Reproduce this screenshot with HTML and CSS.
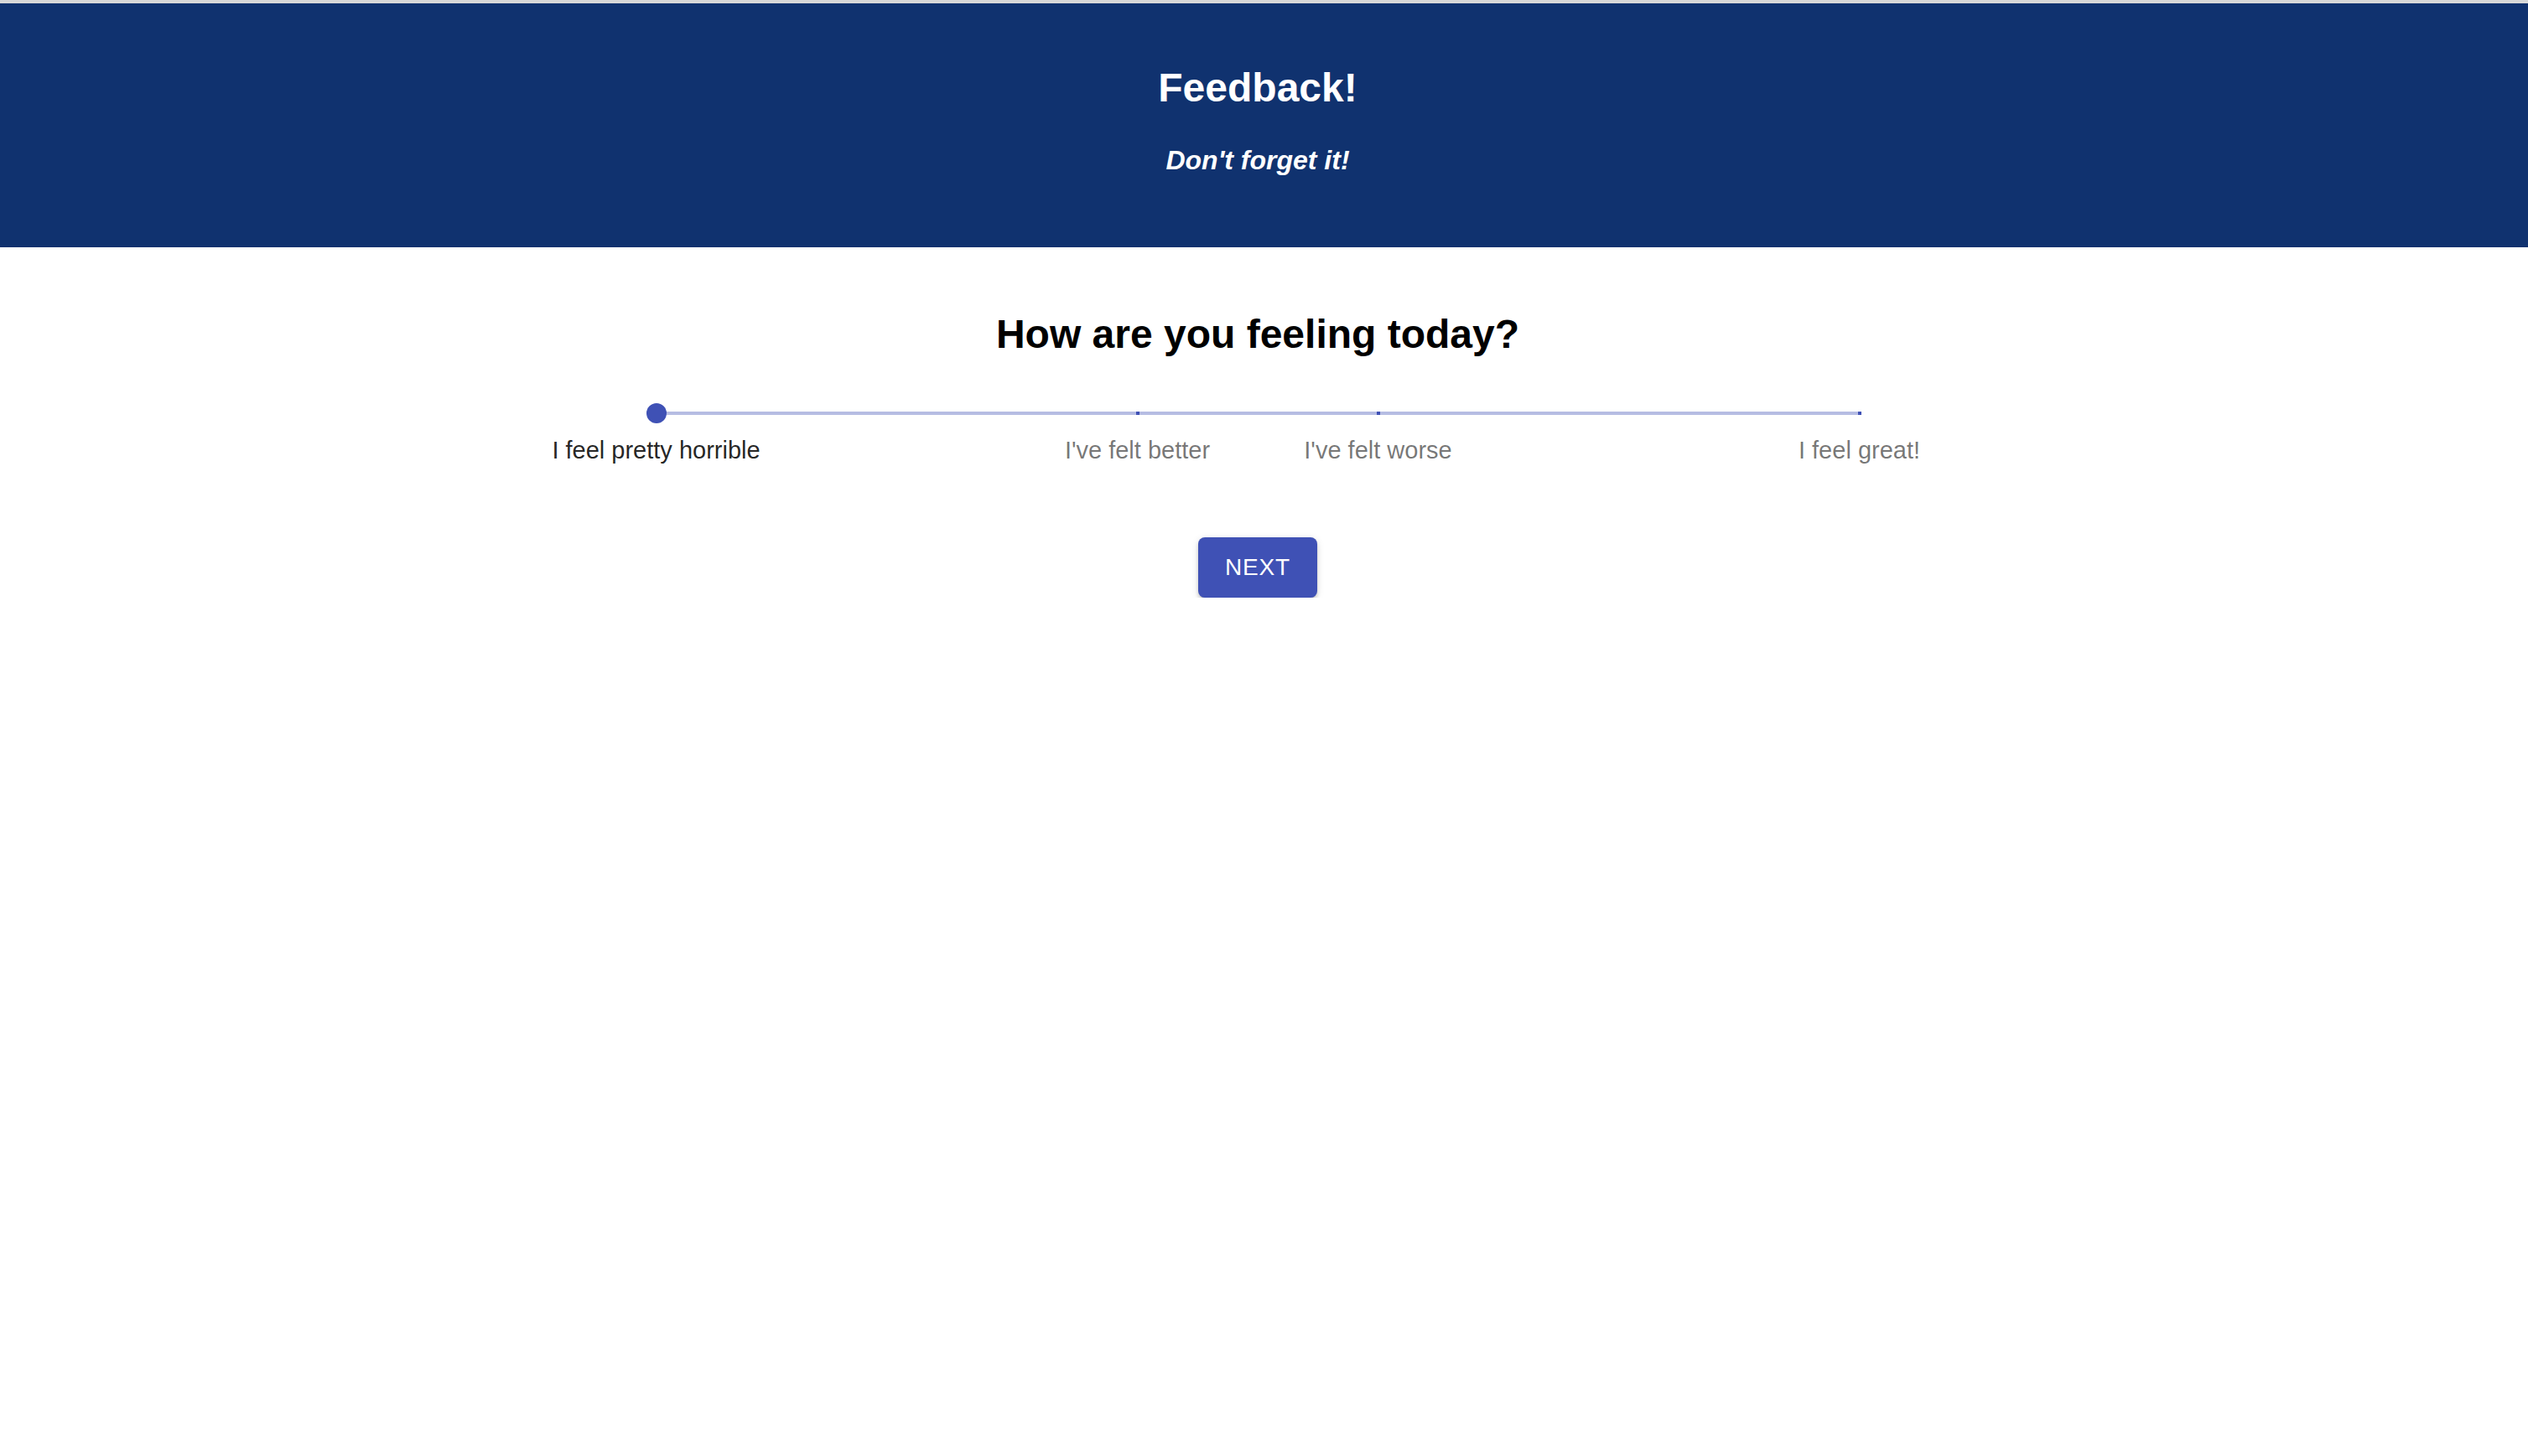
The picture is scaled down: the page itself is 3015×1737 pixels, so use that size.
FILE: index.html
```html
<!DOCTYPE html>
<html lang="en">
<head>
<meta charset="utf-8">
<title>Feedback!</title>
<link rel="stylesheet" href="styles.css">
</head>
<body>
<div class="topstrip"></div>
<header class="header">
  <h1 class="header-title">Feedback!</h1>
  <p class="header-sub">Don't forget it!</p>
</header>
<main class="main">
  <h2 class="question">How are you feeling today?</h2>
  <div class="slider">
    <div class="slider-rail-area">
      <div class="slider-rail"></div>
      <span class="slider-mark" style="left:40%"></span>
      <span class="slider-mark" style="left:60%"></span>
      <span class="slider-mark" style="left:100%"></span>
      <span class="slider-thumb" style="left:0%"></span>
    </div>
    <div class="slider-labels">
      <span class="slider-label slider-label-active" style="left:0%">I feel pretty horrible</span>
      <span class="slider-label" style="left:40%">I've felt better</span>
      <span class="slider-label" style="left:60%">I've felt worse</span>
      <span class="slider-label" style="left:100%">I feel great!</span>
    </div>
  </div>
  <button class="next-btn" type="button">NEXT</button>
</main>
</body>
</html>
```

FILE: styles.css
```css
html, body {
  margin: 0;
  padding: 0;
  background: #ffffff;
}

body {
  font-family: "Liberation Sans", Arial, Helvetica, sans-serif;
  color: #000;
}

.topstrip {
  height: 4px;
  background: #d8d8d8;
}

.header {
  background: #10326f;
  height: 291px;
  box-sizing: border-box;
  padding: 73px 15px 0 0;
  text-align: center;
  color: #ffffff;
}

.header-title {
  margin: 0;
  font-size: 48px;
  line-height: 56px;
  font-weight: bold;
}

.header-sub {
  margin: 38px 0 0 0;
  font-size: 32px;
  line-height: 40px;
  font-weight: bold;
  font-style: italic;
}

.main {
  display: flex;
  flex-direction: column;
  align-items: center;
  padding-right: 15px;
}

.question {
  margin: 76px 0 0 0;
  font-size: 48px;
  line-height: 56px;
  font-weight: bold;
  color: #000;
}

.slider {
  width: 1435px;
  margin-top: 54px;
}

.slider-rail-area {
  position: relative;
  height: 24px;
}

.slider-rail {
  position: absolute;
  left: 0;
  right: 0;
  top: 10px;
  height: 4px;
  background: #b6bde3;
}

.slider-mark {
  position: absolute;
  top: 10px;
  width: 4px;
  height: 4px;
  background: #3f51b5;
  transform: translateX(-50%);
}

.slider-thumb {
  position: absolute;
  top: 0;
  width: 24px;
  height: 24px;
  border-radius: 50%;
  background: #3f51b5;
  transform: translateX(-50%);
}

.slider-labels {
  position: relative;
  height: 40px;
  margin-top: 12px;
}

.slider-label {
  position: absolute;
  top: 0;
  white-space: nowrap;
  font-size: 29px;
  line-height: 40px;
  color: rgba(0, 0, 0, 0.54);
  transform: translateX(-50%);
}

.slider-label-active {
  color: rgba(0, 0, 0, 0.87);
}

.next-btn {
  margin-top: 84px;
  padding: 12px 32px;
  border: 0;
  border-radius: 8px;
  background: #3f51b5;
  color: #ffffff;
  font-family: "Liberation Sans", Arial, Helvetica, sans-serif;
  font-size: 28px;
  line-height: 48px;
  letter-spacing: 0.8px;
  font-weight: normal;
  box-shadow: 0 6px 2px -4px rgba(0, 0, 0, 0.2), 0 4px 4px 0 rgba(0, 0, 0, 0.14), 0 2px 10px 0 rgba(0, 0, 0, 0.12);
  cursor: pointer;
}
```
